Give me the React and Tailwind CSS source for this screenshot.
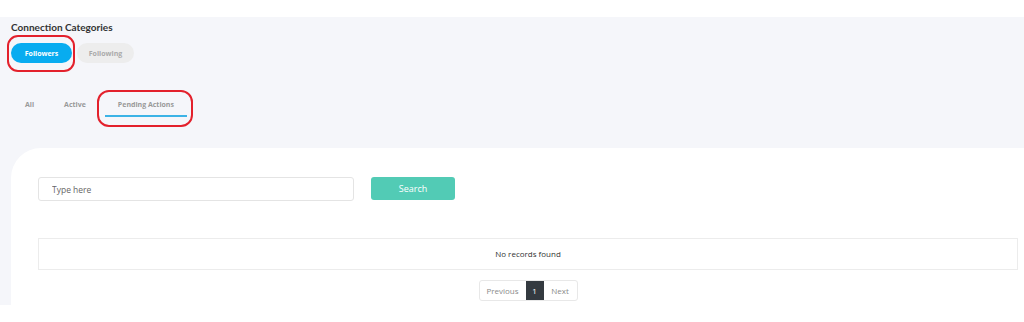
import React, { useState } from 'react';

const tabs = ['All', 'Active', 'Pending Actions'];

export default function App() {
  const [category, setCategory] = useState('followers');
  const [tab, setTab] = useState('Pending Actions');

  return (
    <div className="w-[1024px] h-[322px] overflow-hidden bg-white font-['Open_Sans',sans-serif]">
      <div className="h-[17px] bg-white" />
      <div className="bg-[#f5f6fa] h-[288px] pl-[11px] pt-[3px]">
        <h2 className="text-[10px] leading-[14px] font-bold text-[#333] font-['Lato',sans-serif]">
          Connection Categories
        </h2>

        <div className="flex items-center gap-[5px] mt-[9px] h-[20px]">
          <div className="relative flex">
            <button
              type="button"
              onClick={() => setCategory('followers')}
              className={`h-[20px] w-[61px] rounded-full text-[7px] leading-none font-bold ${category === 'followers' ? 'bg-[#08acf0] text-white' : 'bg-[#ededed] text-[#aaa]'}`}
            >
              Followers
            </button>
            <span className="absolute -left-[4px] -right-[3px] -top-[8px] -bottom-[9px] rounded-[11px] border-2 border-[#e3212c] pointer-events-none" />
          </div>
          <button
            type="button"
            onClick={() => setCategory('following')}
            className={`h-[20px] w-[57px] rounded-full text-[7px] leading-none font-bold ${category === 'following' ? 'bg-[#08acf0] text-white' : 'bg-[#ededed] text-[#aaa]'}`}
          >
            Following
          </button>
        </div>

        <div className="flex items-end mt-[37px] pl-[2px] h-[17px]">
          {tabs.map((t) => {
            const active = tab === t;
            return (
              <div key={t} className={`relative flex ${t === 'All' ? 'mr-[6px]' : t === 'Active' ? 'mr-[7px]' : ''}`}>
                <button
                  type="button"
                  onClick={() => setTab(t)}
                  className={`pb-[5px] text-[7px] leading-[10px] font-bold text-[#999] border-b-2 ${active ? 'border-[#3cb3e6] px-[13px]' : 'border-transparent px-[12px]'}`}
                >
                  {t}
                </button>
                {t === 'Pending Actions' && (
                  <span className="absolute -left-[8px] -right-[6px] -top-[10px] -bottom-[10px] rounded-[12px] border-2 border-[#e3212c] pointer-events-none" />
                )}
              </div>
            );
          })}
        </div>

        <div className="mt-[31px] w-[1040px] h-[157px] bg-white rounded-tl-[30px] pl-[27px] pt-[29px]">
          <div className="flex items-start gap-[17px]">
            <input
              type="text"
              placeholder="Type here"
              className="w-[316px] h-[24px] border border-[#e4e4e4] rounded-[3px] px-[13px] text-[8.5px] text-[#333] placeholder:text-[#666] outline-none"
            />
            <button
              type="button"
              className="w-[84px] h-[23px] rounded-[3px] bg-[#52cbb5] text-white text-[9px] leading-none"
            >
              Search
            </button>
          </div>

          <div className="mt-[37px] w-[980px] h-[32px] border border-[#ececec] flex items-center justify-center text-[8px] text-[#333]">
            No records found
          </div>

          <div className="w-[980px] flex justify-center mt-[10px]">
            <div className="flex h-[21px] border border-[#e8e8e8] rounded-[3px] text-[8px] leading-none">
              <button type="button" className="w-[46px] text-[#8a8a8a]">Previous</button>
              <button type="button" className="w-[18px] bg-[#343a40] text-white">1</button>
              <button type="button" className="w-[33px] text-[#8a8a8a]">Next</button>
            </div>
          </div>
        </div>
      </div>
    </div>
  );
}
